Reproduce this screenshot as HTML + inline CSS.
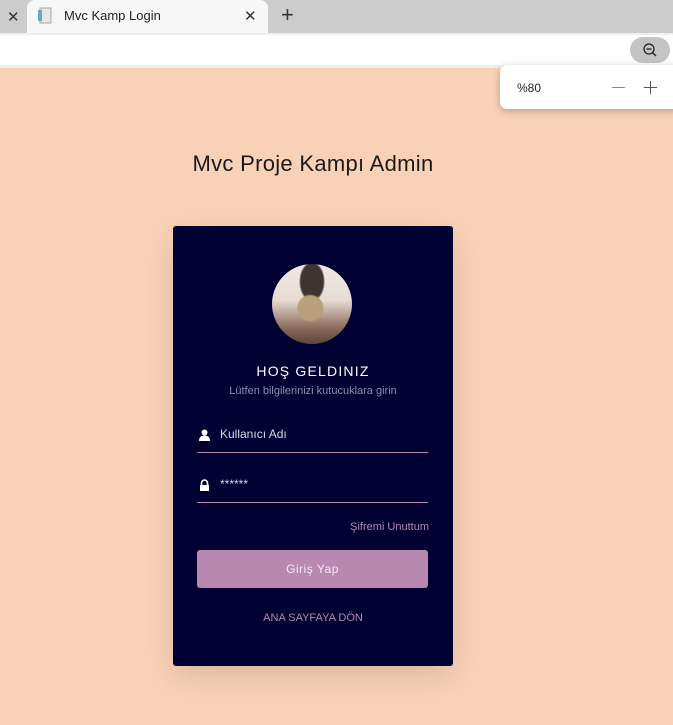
<!DOCTYPE html>
<html><head><meta charset="utf-8"><style>
*{margin:0;padding:0;box-sizing:border-box}
body{width:673px;height:725px;overflow:hidden;background:#f9d1b7;font-family:"Liberation Sans",sans-serif;position:relative}
.tabbar{position:absolute;left:0;top:0;width:673px;height:33px;background:#cccccc}
.tab{position:absolute;left:27px;top:0;width:241px;height:33px;background:#f7f7f7;border-radius:8px 8px 0 0}
.addr{position:absolute;left:0;top:33px;width:673px;height:35px;background:#fff;border-top:2px solid #efefef;border-bottom:3px solid #efefef}
.zbtn{position:absolute;left:630px;top:37px;width:40px;height:26px;border-radius:13px;background:#c4c4c4}
.pop{position:absolute;left:500px;top:65px;width:180px;height:44px;background:#fff;border-radius:7px;box-shadow:0 2px 8px rgba(0,0,0,.25)}
h1{position:absolute;top:151px;width:300px;left:163px;text-align:center;font-weight:normal;font-size:22px;color:#1a1a1a;letter-spacing:0.3px}
.card{position:absolute;left:173px;top:226px;width:280px;height:440px;background:#000033;border-radius:3px;box-shadow:0 10px 30px rgba(0,0,0,.12)}
.av{position:absolute;left:99px;top:38px;width:80px;height:80px;border-radius:50%;overflow:hidden;background:radial-gradient(circle at 48% 55%,#b9a07a 0 20%,transparent 23%),radial-gradient(ellipse at 50% 22%,#3d3530 0 20%,transparent 23%),linear-gradient(#efe9e4,#e8dcd3 45%,#8a6a5a 80%,#5a463c)}
.t1{position:absolute;top:137px;width:100%;text-align:center;color:#fff;font-size:14px;letter-spacing:1.2px}
.t2{position:absolute;top:159px;width:100%;text-align:center;color:#8e8fb0;font-size:11px}
.f{position:absolute;left:24px;width:231px;border-bottom:1px solid #b78ab0;height:28px;color:#d8d8e8;font-size:12px}
.f span{position:absolute;left:23px;top:2px}
.fg{position:absolute;right:24px;top:295px;color:#b78ab0;font-size:11px}
.btn{position:absolute;left:24px;top:324px;width:231px;height:38px;background:#b888b1;border-radius:3px;color:#f4eaf3;font-size:12px;text-align:center;line-height:38px;letter-spacing:.5px}
.back{position:absolute;top:386px;width:100%;text-align:center;color:#b78ab0;font-size:11px}
</style></head><body>
<div class="tabbar">
<div style="position:absolute;left:7px;top:8px;font-size:15px;color:#333">✕</div>
<div class="tab">
<svg style="position:absolute;left:10px;top:7px" width="16" height="18"><rect x="3" y="1" width="11" height="15" fill="#e6e6e6" stroke="#aaa"/><rect x="1" y="3" width="4" height="11" fill="#6fa0d8"/></svg>
<div style="position:absolute;left:37px;top:8px;font-size:13px;color:#222">Mvc Kamp Login</div>
<div style="position:absolute;left:217px;top:7px;font-size:15px;color:#333">✕</div>
</div>
<div style="position:absolute;left:281px;top:2px;font-size:22px;color:#333;font-weight:300">+</div>
</div>
<div class="addr"></div>
<div class="zbtn"><svg width="40" height="26"><circle cx="19" cy="12" r="5" fill="none" stroke="#222" stroke-width="1.3"/><line x1="16.5" y1="12" x2="21.5" y2="12" stroke="#222" stroke-width="1.3"/><line x1="22.5" y1="15.5" x2="26" y2="19" stroke="#222" stroke-width="1.3"/></svg></div>
<div class="pop">
<div style="position:absolute;left:17px;top:16px;font-size:12px;color:#222">%80</div>
<div style="position:absolute;left:112px;top:22px;width:13px;height:1px;background:#888"></div>
<div style="position:absolute;left:144px;top:22px;width:13px;height:1px;background:#555"></div>
<div style="position:absolute;left:150px;top:16px;width:1px;height:13px;background:#555"></div>
</div>
<h1>Mvc Proje Kampı Admin</h1>
<div class="card">
<div class="av"></div>
<div class="t1">HOŞ GELDINIZ</div>
<div class="t2">Lütfen bilgilerinizi kutucuklara girin</div>
<div class="f" style="top:199px"><svg style="position:absolute;left:2px;top:4px" width="11" height="12"><circle cx="5.5" cy="3.5" r="3" fill="#fff"/><path d="M0 12 Q0 6.5 5.5 6.5 Q11 6.5 11 12Z" fill="#fff"/></svg><span>Kullanıcı Adı</span></div>
<div class="f" style="top:249px"><svg style="position:absolute;left:2px;top:4px" width="11" height="12"><path d="M2.5 6V4a3 3 0 0 1 6 0v2" fill="none" stroke="#fff" stroke-width="1.6"/><rect x="1" y="6" width="9" height="6" fill="#fff"/></svg><span>******</span></div>
<div class="fg">Şifremi Unuttum</div>
<div class="btn">Giriş Yap</div>
<div class="back">ANA SAYFAYA DÖN</div>
</div>
</body></html>
